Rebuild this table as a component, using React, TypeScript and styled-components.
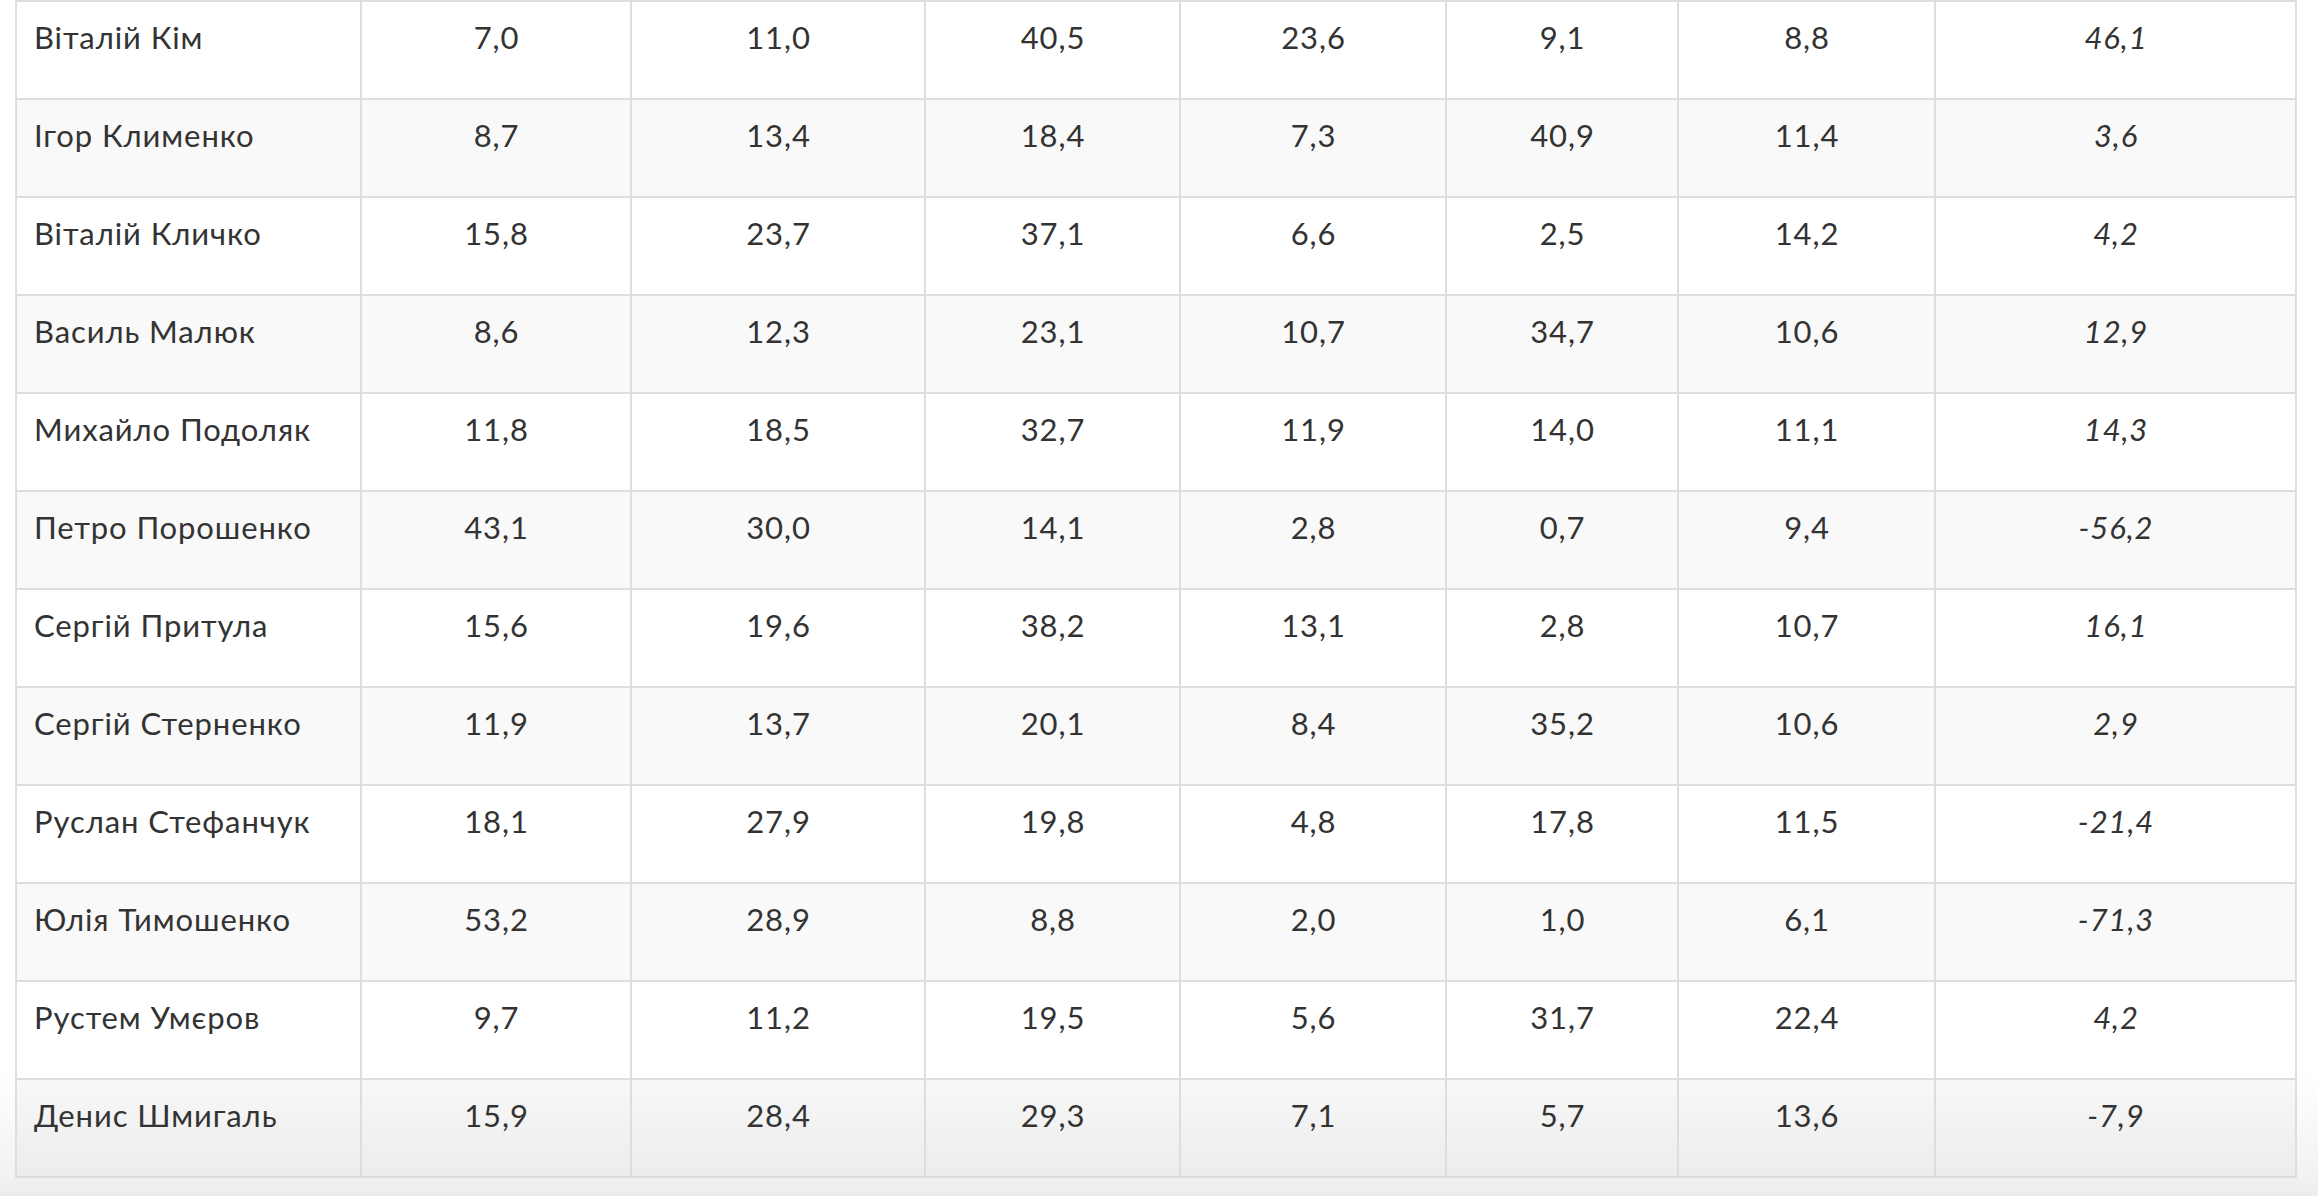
import * as React from "react"
import styled, {createGlobalStyle} from "styled-components";

const GlobalStyle = createGlobalStyle`
  html, body {
    margin: 0;
    padding: 0;
    background: #ffffff;
  }
  body {
    font-family: "Lato", "Open Sans", "Noto Sans", sans-serif;
    color: #333333;
    overflow: hidden;
  }
`;

// page fades to grey near the bottom, the last row shows it through
const Page = styled.div`
  width: 2318px;
  height: 1196px;
  overflow: hidden;
  padding: 0 23px 0 15px;
  box-sizing: border-box;
  background: linear-gradient(to bottom, #ffffff 0, #ffffff 1070px, #f3f3f3 1170px, #ececec 1196px);
`;

const Table = styled.table`
  width: 2280px;
  border-collapse: collapse;
  table-layout: fixed;
  border: 2px solid #dddddd;
`;

const Row = styled.tr<{ $striped: boolean }>`
  background: ${p => p.$striped ? "rgba(0, 0, 0, 0.025)" : "#ffffff"};
`;

const Cell = styled.td<{ $name?: boolean; $italic?: boolean }>`
  height: 98px;
  box-sizing: border-box;
  border: 2px solid #dddddd;
  padding: 13px 16px 0 17px;
  vertical-align: top;
  font-size: 31px;
  letter-spacing: 0.9px;
  line-height: 45px;
  color: #333333;
  text-align: ${p => p.$name ? "left" : "center"};
  font-style: ${p => p.$italic ? "italic" : "normal"};
  white-space: nowrap;
`;

const colWidths = [345, 270, 294, 255, 266, 232, 257, 361];

const rows: [string, string, string, string, string, string, string, string][] = [
  ["Віталій Кім", "7,0", "11,0", "40,5", "23,6", "9,1", "8,8", "46,1"],
  ["Ігор Клименко", "8,7", "13,4", "18,4", "7,3", "40,9", "11,4", "3,6"],
  ["Віталій Кличко", "15,8", "23,7", "37,1", "6,6", "2,5", "14,2", "4,2"],
  ["Василь Малюк", "8,6", "12,3", "23,1", "10,7", "34,7", "10,6", "12,9"],
  ["Михайло Подоляк", "11,8", "18,5", "32,7", "11,9", "14,0", "11,1", "14,3"],
  ["Петро Порошенко", "43,1", "30,0", "14,1", "2,8", "0,7", "9,4", "-56,2"],
  ["Сергій Притула", "15,6", "19,6", "38,2", "13,1", "2,8", "10,7", "16,1"],
  ["Сергій Стерненко", "11,9", "13,7", "20,1", "8,4", "35,2", "10,6", "2,9"],
  ["Руслан Стефанчук", "18,1", "27,9", "19,8", "4,8", "17,8", "11,5", "-21,4"],
  ["Юлія Тимошенко", "53,2", "28,9", "8,8", "2,0", "1,0", "6,1", "-71,3"],
  ["Рустем Умєров", "9,7", "11,2", "19,5", "5,6", "31,7", "22,4", "4,2"],
  ["Денис Шмигаль", "15,9", "28,4", "29,3", "7,1", "5,7", "13,6", "-7,9"],
];

const App = () => {
  return (
    <Page>
      <GlobalStyle/>
      <Table>
        <colgroup>
          {colWidths.map((w, i) => <col key={i} style={{width: w}}/>)}
        </colgroup>
        <tbody>
          {rows.map((r, i) => (
            <Row key={r[0]} $striped={i % 2 === 1}>
              {r.map((v, j) => (
                <Cell key={j} $name={j === 0} $italic={j === 7}>{v}</Cell>
              ))}
            </Row>
          ))}
        </tbody>
      </Table>
    </Page>
  )
}

export default App
